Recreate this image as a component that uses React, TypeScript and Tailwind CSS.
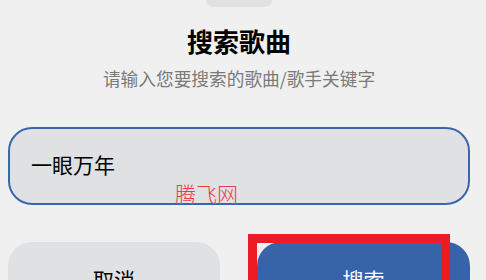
import React from 'react';

const cjk = '"Noto Sans CJK SC", "Noto Sans", sans-serif';

export default function App() {
  return (
    <div
      className="w-[486px] h-[280px] overflow-hidden bg-[#f0f0f0] pl-[8px] pr-[16px]"
      style={{ fontFamily: cjk }}
    >
      <div className="mx-auto w-[66px] h-[7px] rounded-b-[7px] bg-[#e0e1e3]" />

      <h1 className="mt-[17px] text-center text-[26px] leading-[34px] font-bold text-black">
        搜索歌曲
      </h1>
      <p className="mt-[8px] text-center text-[17.7px] leading-[24px] text-[#7a7a7a]">
        请输入您要搜索的歌曲/歌手关键字
      </p>

      <div className="relative mt-[37px] h-[78px] rounded-[24px] border-2 border-[#3a66ac] bg-[#e0e1e3] flex items-center px-[21px]">
        <span className="text-[21px] text-black -mt-[2px]">一眼万年</span>
        <span className="absolute left-[165px] top-[51px] text-[21px] leading-[26px] font-light text-[#e83a4e]">
          腾飞网
        </span>
      </div>

      <div className="mt-[37px] flex gap-[37px]">
        <button className="w-[212px] h-[70px] rounded-[24px] bg-[#e0e1e3] pt-[22px] text-[21px] text-black flex justify-center items-start">
          取消
        </button>
        <div className="relative">
          <button className="w-[213px] h-[70px] rounded-[24px] bg-[#3763a8] pt-[22px] text-[21px] text-white flex justify-center items-start">
            搜索
          </button>
          <div className="absolute left-[-9px] top-[-8px] w-[202px] h-[80px] border-[9px] border-[#ed1c24]" />
        </div>
      </div>
    </div>
  );
}
